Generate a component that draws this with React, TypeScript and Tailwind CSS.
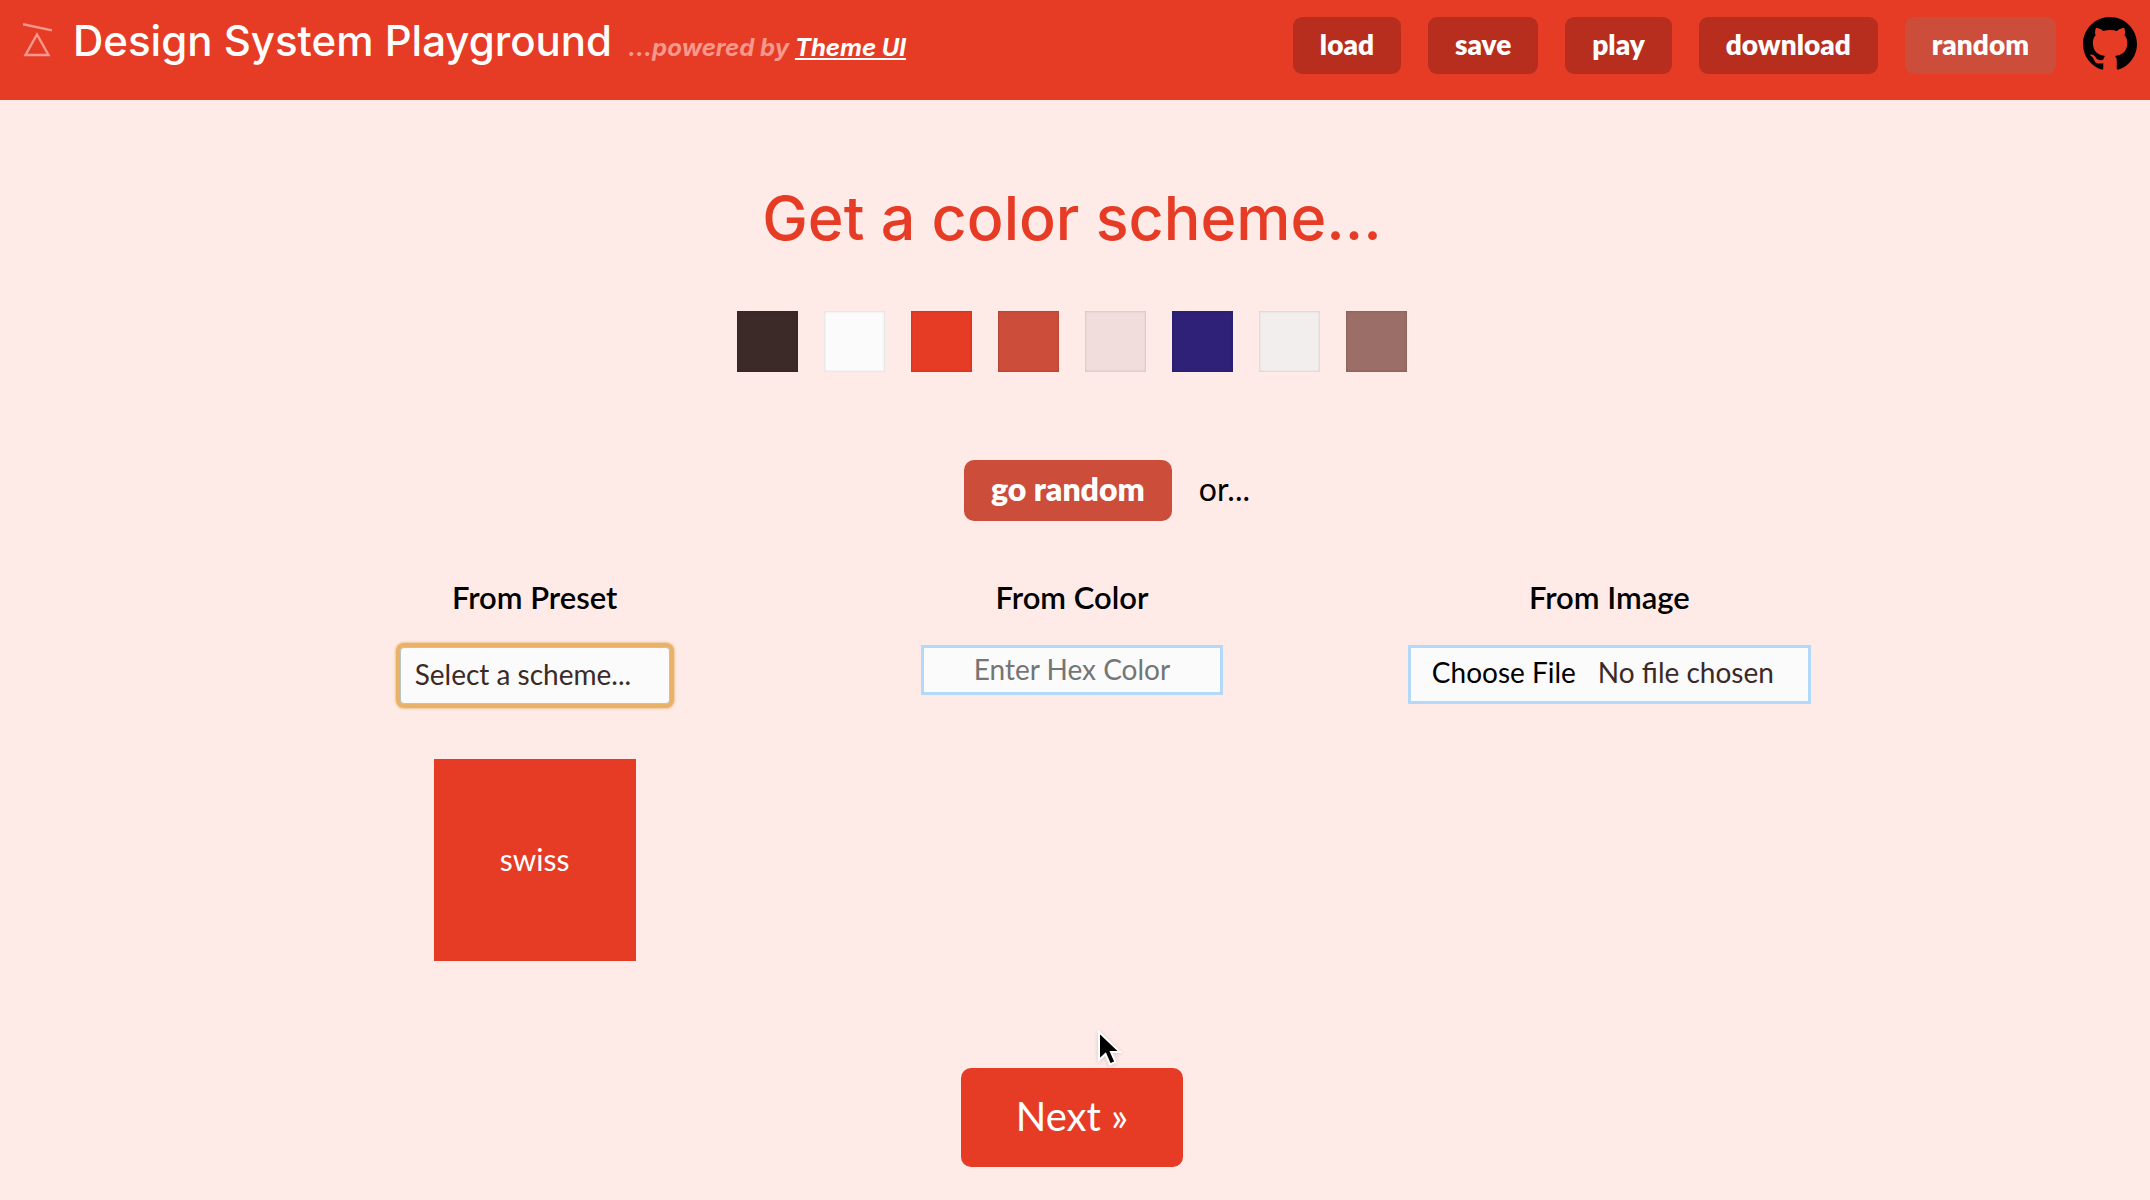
import React, { useState } from 'react';
import clsx from 'clsx';

interface Swatch {
  name: string;
  color: string;
}

const swatches: Swatch[] = [
  { name: 'text', color: '#3c2a28' },
  { name: 'background', color: '#fbfbfb' },
  { name: 'primary', color: '#e63c26' },
  { name: 'secondary', color: '#cc4d39' },
  { name: 'highlight', color: '#f1dedc' },
  { name: 'purple', color: '#2e2177' },
  { name: 'muted', color: '#f3eeee' },
  { name: 'gray', color: '#9b6e67' },
];

const presets = ['base', 'dark', 'deep', 'funk', 'future', 'swiss', 'tosh'];

interface NavButtonProps {
  label: string;
  accent?: boolean;
}

const NavButton: React.FC<NavButtonProps> = ({ label, accent = false }) => (
  <button
    type="button"
    className={clsx(
      'h-[57px] rounded-[9px] px-[27px] pb-[3px] text-[28px] leading-[40px] font-extrabold text-white',
      accent ? 'bg-[#cc4d39]' : 'bg-[#b72e1f]'
    )}
  >
    {label}
  </button>
);

const Logo = () => (
  <svg width="32" height="36" viewBox="0 0 32 36" fill="none" stroke="#f6988b" strokeWidth="2.4">
    <path d="M0 2.200 29 8.400" />
    <path d="M14 12.500 25.500 33H2.500Z" />
  </svg>
);

const GitHubIcon = () => (
  <svg width="54" height="54" viewBox="0 0 16 16" fill="#000">
    <path d="M8 0C3.58 0 0 3.58 0 8c0 3.54 2.29 6.53 5.47 7.59.4.07.55-.17.55-.38 0-.19-.01-.82-.01-1.49-2.01.37-2.53-.49-2.69-.94-.09-.23-.48-.94-.82-1.13-.28-.15-.68-.52-.01-.53.63-.01 1.08.58 1.23.82.72 1.21 1.87.87 2.33.66.07-.52.28-.87.51-1.07-1.78-.2-3.64-.89-3.64-3.95 0-.87.31-1.59.82-2.15-.08-.2-.36-1.02.08-2.12 0 0 .67-.21 2.2.82.64-.18 1.32-.27 2-.27s1.36.09 2 .27c1.53-1.04 2.2-.82 2.2-.82.44 1.1.16 1.92.08 2.12.51.56.82 1.27.82 2.15 0 3.07-1.87 3.75-3.65 3.95.29.25.54.73.54 1.48 0 1.07-.01 1.93-.01 2.2 0 .21.15.46.55.38A8.01 8.01 0 0 0 16 8c0-4.42-3.58-8-8-8Z" />
  </svg>
);

const Header = () => (
  <header className="flex h-[100px] items-start justify-between bg-[#e63c26] pt-[17px] pr-[13px] pl-[23px]">
    <div className="flex items-start gap-[18px]">
      <div className="pt-[5px]">
        <Logo />
      </div>
      <div className="flex items-baseline gap-4 font-['Inter',sans-serif]">
        <h1 className="text-[42px] leading-[48px] font-medium text-white">Design System Playground</h1>
        <p className="text-[24px] font-bold text-[#f6988b] italic">
          ...powered by{' '}
          <a href="#theme-ui" className="text-white underline underline-offset-2">
            Theme UI
          </a>
        </p>
      </div>
    </div>
    <nav className="flex items-start gap-[27px]">
      <NavButton label="load" />
      <NavButton label="save" />
      <NavButton label="play" />
      <NavButton label="download" />
      <NavButton label="random" accent />
      <a href="#github" aria-label="GitHub">
        <GitHubIcon />
      </a>
    </nav>
  </header>
);

const Cursor = () => (
  <svg
    className="absolute -top-[39px] left-[136px] drop-shadow-sm"
    width="26"
    height="38"
    viewBox="0 0 26 38"
  >
    <path
      d="M2 3V31L8.500 25 13 35.500 18.500 33 14 23H23Z"
      fill="#000"
      stroke="#fff"
      strokeWidth="2"
    />
  </svg>
);

export default function App() {
  const [scheme, setScheme] = useState('');
  const [hex, setHex] = useState('');

  return (
    <div className="min-h-screen bg-[#feebe7] font-['Lato',sans-serif] text-black">
      <Header />
      <main className="flex flex-col items-center pt-[82px] pr-1.5 pb-8">
        <h2 className="font-['Inter',sans-serif] text-[61px] leading-[72px] font-medium text-[#e63c26]">
          Get a color scheme...
        </h2>

        <ul className="mt-[57px] flex gap-[26px]">
          {swatches.map((swatch) => (
            <li
              key={swatch.name}
              title={swatch.name}
              className="size-[61px] shadow-[inset_0_0_2px_1px_rgba(0,0,0,0.1)]"
              style={{ backgroundColor: swatch.color }}
            />
          ))}
        </ul>

        <div className="mt-[88px] flex items-center gap-[27px] pl-[70px]">
          <button
            type="button"
            className="h-[61px] rounded-[10px] bg-[#cc4d39] px-[27px] pb-[3px] text-[32px] leading-[40px] font-extrabold text-white"
          >
            go random
          </button>
          <span className="pb-[3px] text-[32px] leading-[40px]">or...</span>
        </div>

        <div className="mt-[56px] grid w-3/4 grid-cols-3 justify-items-center gap-x-1">
          <div className="flex flex-col items-center">
            <label htmlFor="preset" className="text-[31px] leading-[40px] font-semibold">
              From Preset
            </label>
            <select
              id="preset"
              value={scheme}
              onChange={(e) => setScheme(e.target.value)}
              className="mt-[30px] h-[57px] w-[270px] appearance-none rounded-[4px] border border-[#b5c6c4] bg-[#fbfbfb] px-[14px] pb-[3px] text-[28px] leading-[40px] text-[#3c2a28] shadow-[0_0_0_4px_#eab269,0_0_2px_5px_#f1c590] outline-none"
            >
              <option value="">Select a scheme...</option>
              {presets.map((preset) => (
                <option key={preset} value={preset}>
                  {preset}
                </option>
              ))}
            </select>
            <div className="mt-[55px] flex size-[202px] items-center justify-center bg-[#e63c26] pb-[2px] text-[30px] leading-[40px] text-white">
              {scheme || 'swiss'}
            </div>
          </div>

          <div className="flex flex-col items-center">
            <label htmlFor="hex" className="text-[31px] leading-[40px] font-semibold">
              From Color
            </label>
            <input
              id="hex"
              type="text"
              value={hex}
              onChange={(e) => setHex(e.target.value)}
              placeholder="Enter Hex Color"
              className="mt-[28px] h-[50px] w-[302px] border-3 border-[#b2d9fa] bg-[#fbfbfb] pb-[2px] text-center text-[28px] leading-[40px] text-[#3c2a28] placeholder:text-[#757575]"
            />
          </div>

          <div className="flex flex-col items-center">
            <label htmlFor="image" className="text-[31px] leading-[40px] font-semibold">
              From Image
            </label>
            <input
              id="image"
              type="file"
              className="mt-[28px] h-[59px] w-[403px] border-3 border-[#b2d9fa] bg-[#fbfbfb] px-[21px] py-[4px] text-[28px] leading-[40px] text-[#3c2a28] file:mr-[22px] file:text-black"
            />
          </div>
        </div>

        <div className="relative mt-[107px]">
          <button
            type="button"
            className="h-[99px] rounded-[10px] bg-[#e63c26] px-[55px] pb-[3px] text-[40px] leading-[48px] text-white"
          >
            Next »
          </button>
          <Cursor />
        </div>
      </main>
    </div>
  );
}
